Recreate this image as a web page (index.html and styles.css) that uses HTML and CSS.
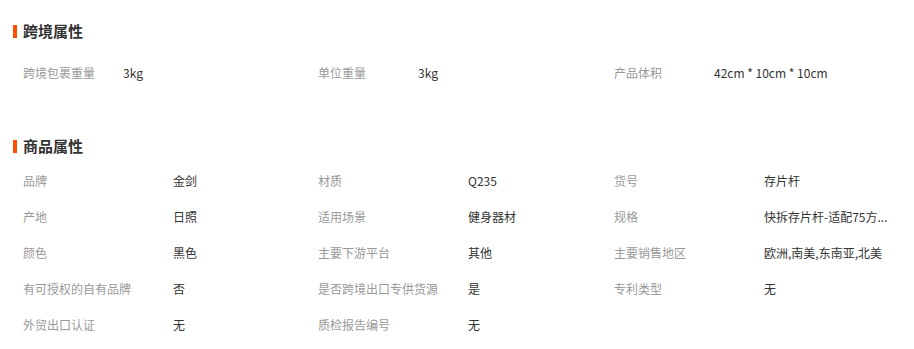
FILE: index.html
```html
<!DOCTYPE html>
<html lang="zh">
<head>
<meta charset="utf-8">
<link rel="stylesheet" href="styles.css">
</head>
<body>
<div class="page">
  <section class="sec sec-cross">
    <h2 class="sec-title">跨境属性</h2>
    <div class="grid grid-cross">
      <div class="cell"><span class="lbl">跨境包裹重量</span><span class="val">3kg</span></div>
      <div class="cell"><span class="lbl">单位重量</span><span class="val">3kg</span></div>
      <div class="cell"><span class="lbl">产品体积</span><span class="val">42cm * 10cm * 10cm</span></div>
    </div>
  </section>
  <section class="sec sec-goods">
    <h2 class="sec-title">商品属性</h2>
    <div class="grid grid-goods">
      <div class="cell"><span class="lbl">品牌</span><span class="val">金剑</span></div>
      <div class="cell"><span class="lbl">材质</span><span class="val">Q235</span></div>
      <div class="cell"><span class="lbl">货号</span><span class="val">存片杆</span></div>
      <div class="cell"><span class="lbl">产地</span><span class="val">日照</span></div>
      <div class="cell"><span class="lbl">适用场景</span><span class="val">健身器材</span></div>
      <div class="cell"><span class="lbl">规格</span><span class="val">快拆存片杆-适配75方...</span></div>
      <div class="cell"><span class="lbl">颜色</span><span class="val">黑色</span></div>
      <div class="cell"><span class="lbl">主要下游平台</span><span class="val">其他</span></div>
      <div class="cell"><span class="lbl">主要销售地区</span><span class="val">欧洲,南美,东南亚,北美</span></div>
      <div class="cell"><span class="lbl">有可授权的自有品牌</span><span class="val">否</span></div>
      <div class="cell"><span class="lbl">是否跨境出口专供货源</span><span class="val">是</span></div>
      <div class="cell"><span class="lbl">专利类型</span><span class="val">无</span></div>
      <div class="cell"><span class="lbl">外贸出口认证</span><span class="val">无</span></div>
      <div class="cell"><span class="lbl">质检报告编号</span><span class="val">无</span></div>
    </div>
  </section>
</div>
</body>
</html>
```
FILE: styles.css
```css
* { box-sizing: border-box; }
html, body { margin: 0; padding: 0; background: #fff; }
body {
  font-family: "Noto Sans CJK SC", "Noto Sans", sans-serif;
  font-size: 12px;
  color: #333;
}
.page { padding: 21px 0 0 13px; width: 914px; }
.sec-title {
  margin: 0;
  font-size: 15px;
  font-weight: bold;
  line-height: 20px;
  height: 20px;
  color: #333;
  display: flex;
  align-items: center;
  gap: 6px;
}
.sec-title::before {
  content: "";
  width: 4px;
  height: 13px;
  background: #ff4e00;
  display: block;
}
.grid {
  display: grid;
  grid-template-columns: 295px 296px 296px;
  padding-left: 10px;
}
.grid-cross { margin-top: 14px; }
.sec-goods { margin-top: 45px; }
.grid-goods { margin-top: 7px; grid-auto-rows: 36px; }
.grid-cross .cell { height: 36px; }
.cell {
  display: flex;
  align-items: center;
  white-space: nowrap;
  line-height: 18px;
}
.lbl { color: #999; flex: none; }
.grid-cross .lbl { width: 100px; }
.grid-goods .lbl { width: 150px; }
.val { color: #333; }
```
